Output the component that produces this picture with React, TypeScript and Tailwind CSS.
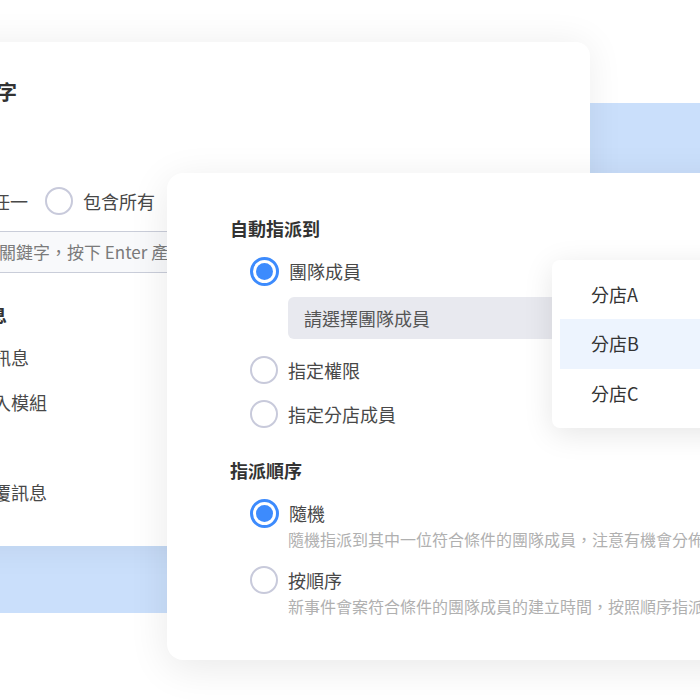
import React from "react";

const font = { fontFamily: '"Noto Sans CJK TC", "Noto Sans", sans-serif' };

function Radio({ checked }: { checked?: boolean }) {
  if (checked) {
    return (
      <span className="flex h-[29px] w-[29px] shrink-0 items-center justify-center rounded-full border-[3px] border-[#3d8bfd] bg-white">
        <span className="block h-[17px] w-[17px] rounded-full bg-[#3d8bfd]" />
      </span>
    );
  }
  return <span className="block h-[28px] w-[28px] shrink-0 rounded-full border-2 border-[#c8cadb] bg-white" />;
}

function Option({ checked, label, desc, className }: { checked?: boolean; label: string; desc?: string; className?: string }) {
  return (
    <div className={className}>
      <div className="flex h-[28px] items-center">
        <Radio checked={checked} />
        <span className="ml-[10px] whitespace-nowrap text-[18px] leading-[24px] text-[#484848]">{label}</span>
      </div>
      {desc && (
        <div className="mt-[2px] whitespace-nowrap pl-[38px] text-[16px] leading-[20px] text-[#b0b0b0]">{desc}</div>
      )}
    </div>
  );
}

export default function App() {
  return (
    <div className="relative h-[700px] w-[700px] overflow-hidden bg-white" style={font}>
      {/* blue backdrop */}
      <div className="absolute left-[-40px] top-[103px] h-[510px] w-[800px] bg-[#cadffb]" />

      {/* back card */}
      <div className="absolute left-[-120px] top-[42px] h-[504px] w-[710px] rounded-[14px] bg-white shadow-[0_0_36px_rgba(0,0,0,0.07)]">
        <div className="flex flex-col">
          <div className="ml-[77px] mt-[36px] text-[20px] font-bold leading-[28px] text-[#333]">關鍵字</div>
          <div className="ml-[38px] mt-[81px] flex h-[28px] items-center">
            <Radio />
            <span className="ml-[10px] text-[18px] leading-[24px] text-[#484848]">包含任一</span>
            <span className="ml-[17px] block">
              <Radio />
            </span>
            <span className="ml-[10px] text-[18px] leading-[24px] text-[#484848]">包含所有</span>
          </div>
          <div className="ml-[72px] mt-[16px] flex h-[42px] w-[560px] items-center border border-[#c9cdd9] bg-[#f8f9fb] px-[12px] text-[17px] text-[#7a7a7a]">
            輸入關鍵字，按下 Enter 產生標籤
          </div>
          <div className="ml-[55px] mt-[29px] text-[18px] font-bold leading-[24px] text-[#333]">收到訊息</div>
          <div className="ml-[95px] mt-[19px] text-[18px] leading-[24px] text-[#484848]">新訊息</div>
          <div className="ml-[95px] mt-[21px] text-[18px] leading-[24px] text-[#484848]">輸入模組</div>
          <div className="ml-[95px] mt-[66px] text-[18px] leading-[24px] text-[#484848]">回覆訊息</div>
        </div>
      </div>

      {/* front card */}
      <div className="absolute left-[167px] top-[173px] h-[487px] w-[620px] rounded-[16px] bg-white shadow-[0_8px_40px_rgba(0,0,0,0.09)]">
        <div className="flex flex-col pl-[63px] pt-[43px]">
          <div className="text-[18px] font-bold leading-[24px] text-[#333]">自動指派到</div>
          <Option checked label="團隊成員" className="ml-[20px] mt-[17px]" />
          <div className="ml-[58px] mt-[12px] flex h-[42px] w-[300px] items-center rounded-[6px] bg-[#e8e9ef] px-[16px] text-[18px] text-[#555]">
            請選擇團隊成員
          </div>
          <Option label="指定權限" className="ml-[20px] mt-[17px]" />
          <Option label="指定分店成員" className="ml-[20px] mt-[16px]" />
          <div className="mt-[30px] text-[18px] font-bold leading-[24px] text-[#333]">指派順序</div>
          <Option
            checked
            label="隨機"
            desc="隨機指派到其中一位符合條件的團隊成員，注意有機會分佈不平均"
            className="ml-[20px] mt-[17px]"
          />
          <Option
            label="按順序"
            desc="新事件會案符合條件的團隊成員的建立時間，按照順序指派"
            className="ml-[20px] mt-[17px]"
          />
        </div>
      </div>

      {/* dropdown */}
      <div className="absolute left-[552px] top-[260px] flex h-[168px] w-[200px] flex-col rounded-[8px] bg-white px-[8px] py-[10px] shadow-[0_6px_30px_rgba(0,0,0,0.10)]">
        <div className="flex h-[50px] items-center pl-[31px] text-[18px] text-[#333]">分店A</div>
        <div className="flex h-[50px] items-center bg-[#edf4fe] pl-[31px] text-[18px] text-[#333]">分店B</div>
        <div className="flex h-[50px] items-center pl-[31px] text-[18px] text-[#333]">分店C</div>
      </div>
    </div>
  );
}
